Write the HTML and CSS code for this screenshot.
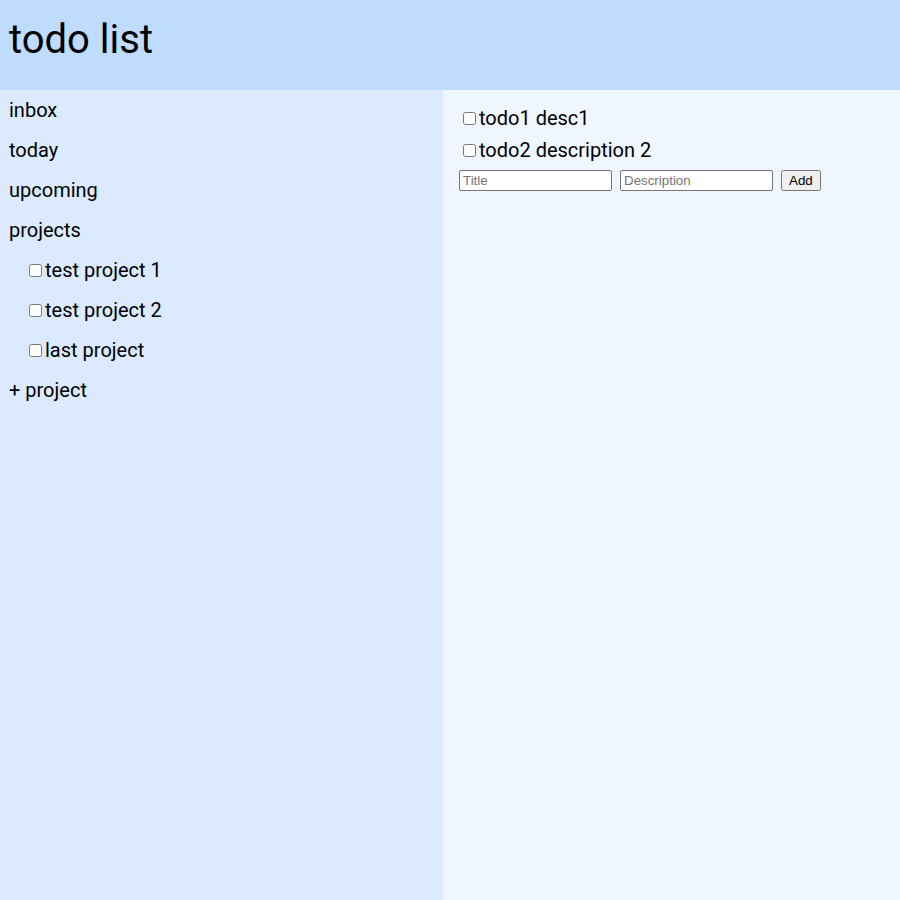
FILE: index.html
```html
<!DOCTYPE html>
<html lang="en">
<head>
<meta charset="utf-8">
<title>todo list</title>
<link rel="stylesheet" href="styles.css">
</head>
<body>
<header class="header"><h1 class="title">todo list</h1></header>
<div class="layout">
  <nav class="sidebar">
    <div class="nav-item">inbox</div>
    <div class="nav-item">today</div>
    <div class="nav-item">upcoming</div>
    <div class="nav-item">projects</div>
    <label class="nav-item project"><input type="checkbox">test project 1</label>
    <label class="nav-item project"><input type="checkbox">test project 2</label>
    <label class="nav-item project"><input type="checkbox">last project</label>
    <div class="nav-item">+ project</div>
  </nav>
  <main class="main">
    <label class="todo"><input type="checkbox">todo1 desc1</label>
    <label class="todo"><input type="checkbox">todo2 description 2</label>
    <form class="add-form">
      <input class="field" type="text" placeholder="Title">
      <input class="field" type="text" placeholder="Description">
      <button class="add-btn" type="button">Add</button>
    </form>
  </main>
</div>
</body>
</html>
```
FILE: styles.css
```css
html, body {
  margin: 0;
  padding: 0;
}
body {
  font-family: Roboto, "Liberation Sans", sans-serif;
  color: #000;
  background: #eff6ff;
}
.header {
  box-sizing: border-box;
  height: 90px;
  padding: 16px 9px 0;
  background: #bfdbfe;
}
.title {
  margin: 0;
  font-size: 40px;
  font-weight: 400;
  line-height: normal;
}
.layout {
  display: flex;
  height: calc(100vh - 90px);
}
.sidebar {
  width: 443px;
  flex: none;
  background: #dbeafe;
  display: flex;
  flex-direction: column;
}
.nav-item {
  display: flex;
  align-items: center;
  padding: 8px 8px 8px 9px;
  font-size: 20px;
  line-height: 24px;
}
.project {
  padding-left: 25px;
}
.main {
  flex: 1;
  background: #eff6ff;
  padding: 16px;
  display: flex;
  flex-direction: column;
  gap: 8px;
}
.todo {
  display: flex;
  align-items: center;
  font-size: 20px;
  line-height: 24px;
}
.add-form {
  display: flex;
  gap: 8px;
  margin: 0;
}
.field {
  box-sizing: border-box;
  width: 153px;
  height: 21px;
  margin: 0;
  font-family: "Liberation Sans", Arial, sans-serif;
  font-size: 13.33px;
}
.add-btn {
  margin: 0;
  height: 21px;
  font-family: "Liberation Sans", Arial, sans-serif;
  font-size: 13.33px;
}
```
